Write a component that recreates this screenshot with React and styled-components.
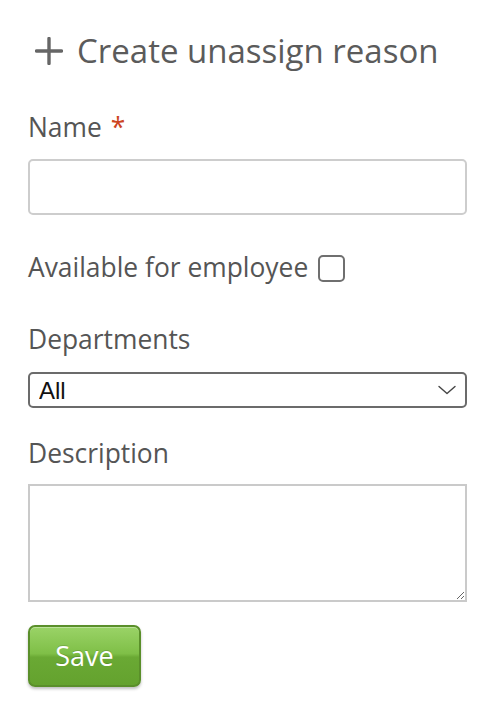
import React from "react";
import styled, { createGlobalStyle } from "styled-components";

const Global = createGlobalStyle`
  html, body { margin: 0; padding: 0; background: #fff; }
  body { font-family: "Open Sans", "DejaVu Sans", sans-serif; }
  * { box-sizing: border-box; }
`;

const Page = styled.div`
  width: 500px;
  padding: 28px 33px 20px 28px;
  display: flex;
  flex-direction: column;
`;

const Title = styled.h1`
  margin: 0 0 37px 0;
  display: flex;
  align-items: center;
  gap: 14px;
  font-size: 33px;
  font-weight: 400;
  line-height: 45px;
  color: #5b5b5b;
`;

const PlusIcon = styled.svg`
  width: 28px;
  height: 28px;
  margin-left: 7px;
  flex: none;
`;

const Field = styled.div`
  display: flex;
  flex-direction: column;
  margin-bottom: ${(p) => p.$mb || 0}px;
`;

const Label = styled.label`
  font-size: 26.4px;
  line-height: 35px;
  color: #555;
  margin-bottom: ${(p) => p.$mb || 0}px;
  display: flex;
  align-items: center;
  gap: 10px;
`;

const Required = styled.span`
  color: #cc4422;
  margin-left: 2px;
`;

const TextInput = styled.input`
  width: 439px;
  height: 56px;
  border: 2px solid #cdcdcd;
  border-radius: 5px;
  padding: 0 10px;
  font-family: inherit;
  font-size: 24px;
  outline: none;
  background: #fff;
`;

const Checkbox = styled.input`
  appearance: none;
  flex: none;
  margin: 2px 0 0 0;
  width: 27px;
  height: 27px;
  border: 2px solid #6f6f6f;
  border-radius: 5px;
  background: #fff;
`;

const SelectWrap = styled.div`
  position: relative;
  width: 439px;
`;

const Select = styled.select`
  appearance: none;
  width: 100%;
  height: 36px;
  border: 2px solid #6b6b6b;
  border-radius: 5px;
  padding: 0 0 0 9px;
  background: #fff;
  color: #111;
  font-family: "Liberation Sans", Arial, sans-serif;
  font-size: 24px;
  outline: none;
`;

const Chevron = styled.svg`
  position: absolute;
  right: 11px;
  top: 13px;
  width: 18px;
  height: 10px;
  pointer-events: none;
`;

const TextArea = styled.textarea`
  width: 439px;
  height: 118px;
  border: 2px solid #cacaca;
  border-radius: 0;
  padding: 6px 10px;
  font-family: inherit;
  font-size: 24px;
  outline: none;
  resize: both;
`;

const SaveButton = styled.button`
  width: 113px;
  height: 62px;
  border: 2px solid #5a8f2a;
  border-radius: 7px;
  background: linear-gradient(
    to bottom,
    #9ad367 0%,
    #7fbf47 46%,
    #6aa934 52%,
    #64a22e 100%
  );
  box-shadow: 0 2px 3px rgba(0, 0, 0, 0.25), inset 0 1px 0 rgba(255, 255, 255, 0.35);
  color: #fff;
  font-family: "Open Sans", sans-serif;
  font-size: 27px;
  line-height: 1;
  padding: 0 0 2px 0;
  text-shadow: 0 -1px 0 rgba(0, 0, 0, 0.15);
  cursor: pointer;
`;

export default function App() {
  return (
    <>
      <Global />
      <Page>
        <Title>
          <PlusIcon viewBox="0 0 28 28">
            <path d="M14 1.5V26.5M1.5 14H26.5" stroke="#666" strokeWidth="3.4" strokeLinecap="round" fill="none" />
          </PlusIcon>
          Create unassign reason
        </Title>

        <Field $mb={35}>
          <Label $mb={14} htmlFor="name">
            <span>
              Name <Required>*</Required>
            </span>
          </Label>
          <TextInput id="name" type="text" />
        </Field>

        <Field $mb={37}>
          <Label>
            Available for employee
            <Checkbox type="checkbox" />
          </Label>
        </Field>

        <Field $mb={28}>
          <Label $mb={15} htmlFor="dept">Departments</Label>
          <SelectWrap>
            <Select id="dept" defaultValue="all">
              <option value="all">All</option>
            </Select>
            <Chevron viewBox="0 0 18 10">
              <path d="M1 1.5L9 8.5L17 1.5" stroke="#444" strokeWidth="1.4" fill="none" strokeLinecap="round" strokeLinejoin="round" />
            </Chevron>
          </SelectWrap>
        </Field>

        <Field $mb={23}>
          <Label $mb={13} htmlFor="desc">Description</Label>
          <TextArea id="desc" />
        </Field>

        <div>
          <SaveButton type="button">Save</SaveButton>
        </div>
      </Page>
    </>
  );
}
